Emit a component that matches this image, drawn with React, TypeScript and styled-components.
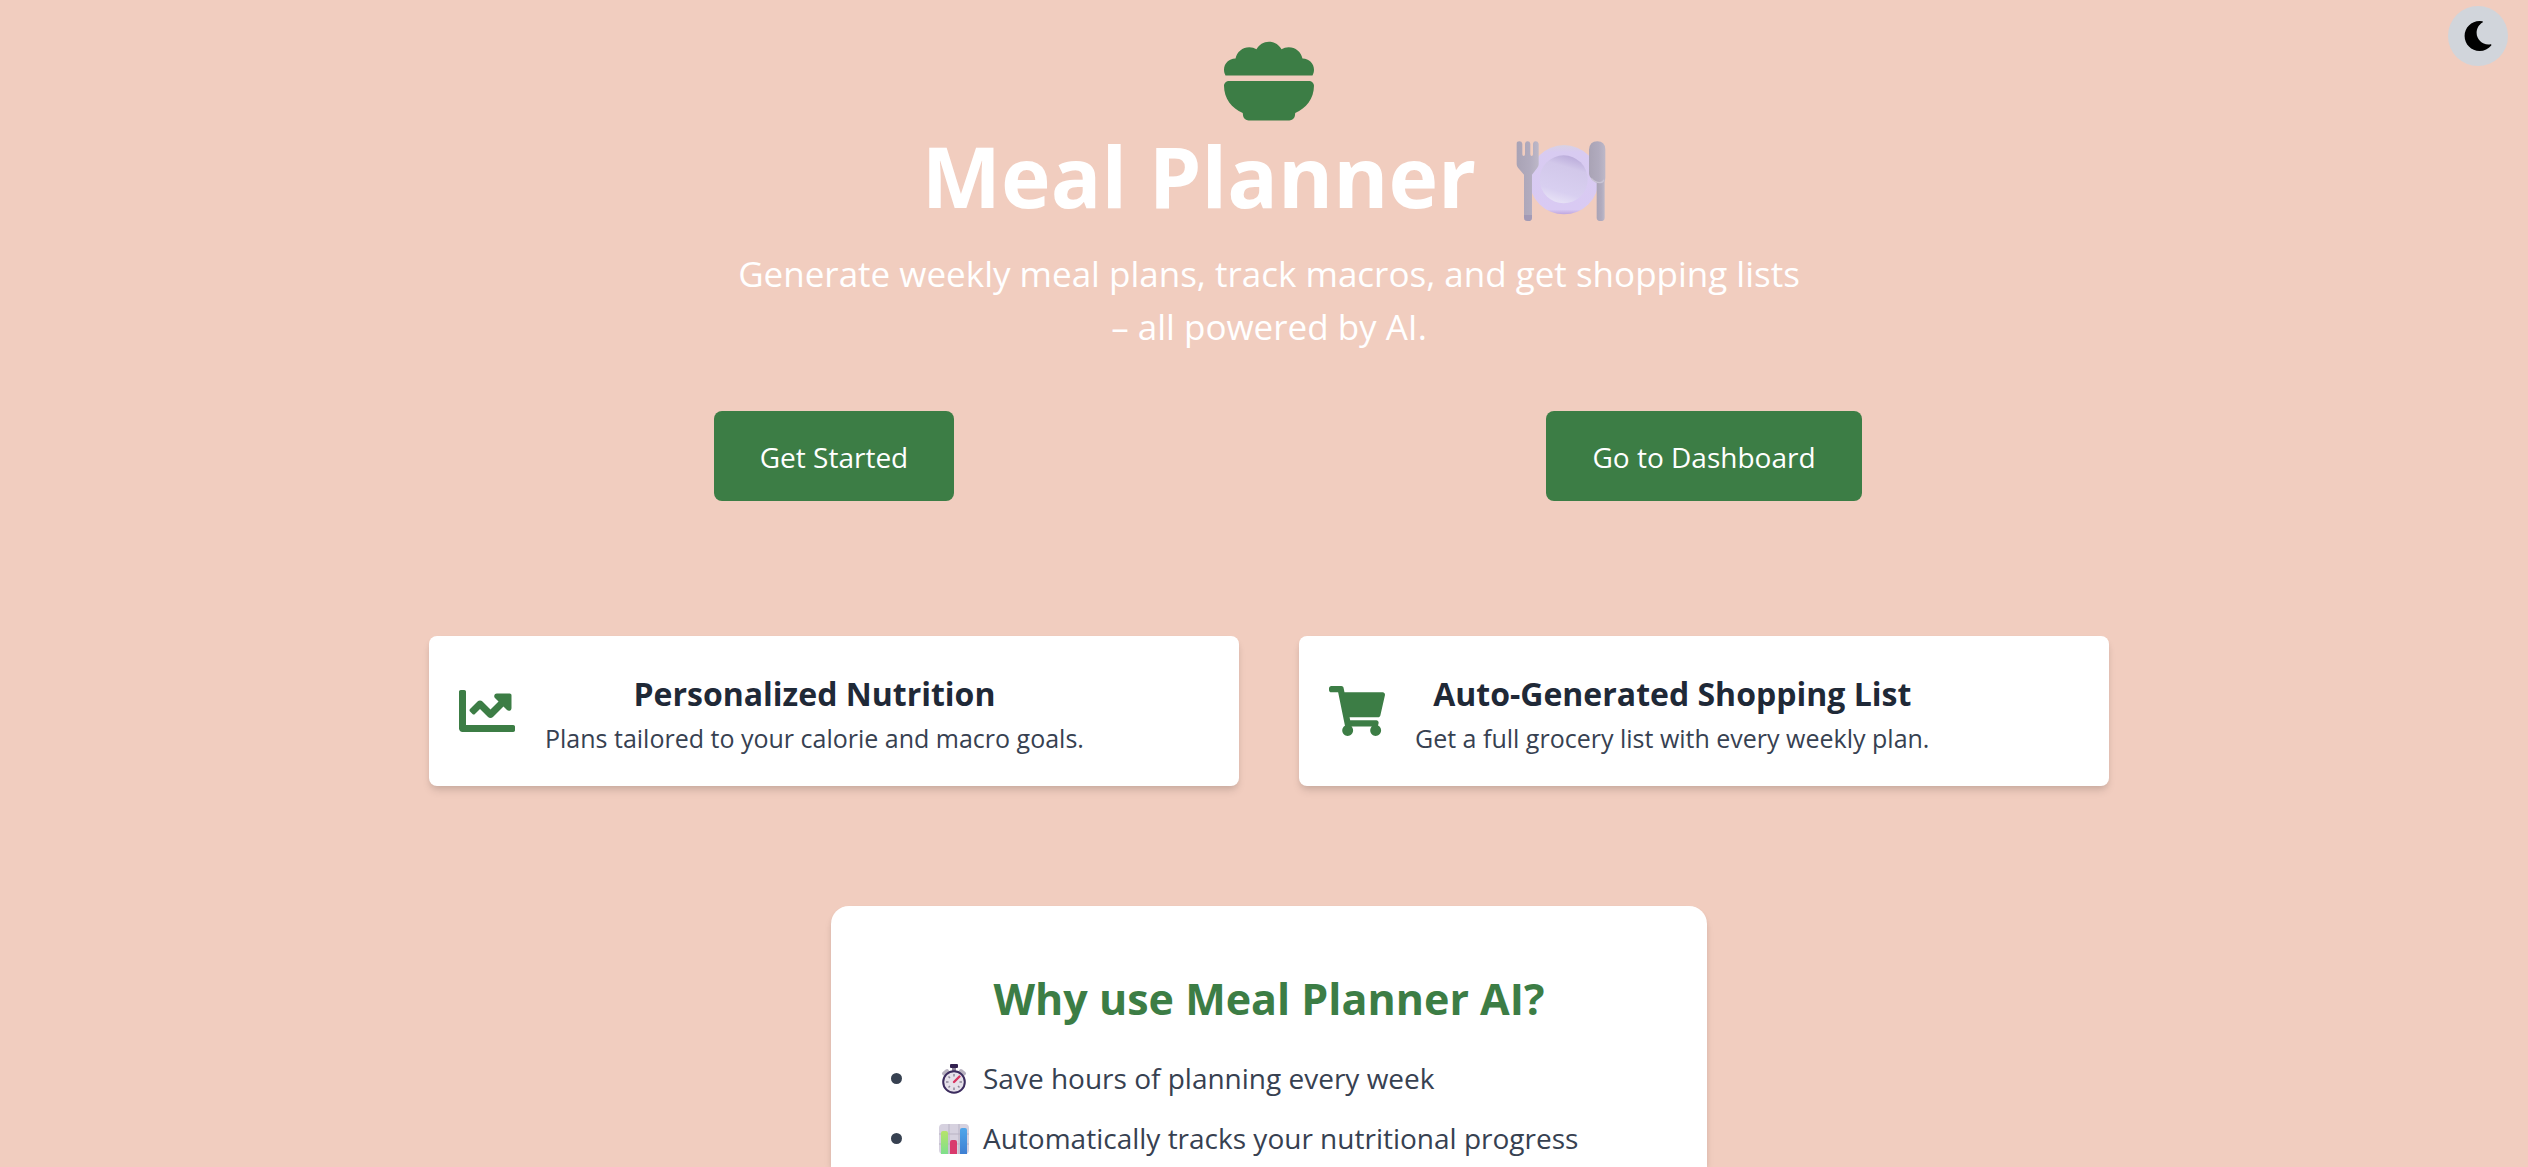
import React from "react";
import styled, { createGlobalStyle } from "styled-components";
import { FaBowlFood } from "react-icons/fa6";
import { FaChartLine, FaMoon, FaShoppingCart } from "react-icons/fa";

const GREEN = "#3c7d45";

const GlobalStyle = createGlobalStyle`
  *, *::before, *::after { box-sizing: border-box; }
  body {
    margin: 0;
    background: #f1cdbf;
    font-family: "Segoe UI", "Open Sans", "Noto Sans", sans-serif;
  }
  h1, h2, h3, p, ul { margin: 0; padding: 0; }
`;

const Page = styled.main`
  min-height: 100vh;
  padding: 36px 0 0 10px;
  display: flex;
  flex-direction: column;
  align-items: center;
  text-align: center;
`;

const ThemeToggle = styled.button`
  position: absolute;
  top: 6px;
  right: 20px;
  width: 60px;
  height: 60px;
  padding: 0;
  border: 0;
  border-radius: 50%;
  background: #d1d5db;
  color: #000;
  font-size: 30px;
  display: flex;
  align-items: center;
  justify-content: center;
  cursor: pointer;
`;

const Hero = styled.header`
  display: flex;
  flex-direction: column;
  align-items: center;
  color: #fff;
`;

const HeroIcon = styled(FaBowlFood)`
  font-size: 90px;
  color: ${GREEN};
`;

const Title = styled.h1`
  display: flex;
  align-items: center;
  gap: 40px;
  margin-top: 5px;
  font-size: 84px;
  line-height: 90px;
  font-weight: 700;

  > svg {
    overflow: visible;
  }
`;

const Tagline = styled.p`
  max-width: 1080px;
  margin-top: 26px;
  font-size: 35px;
  line-height: 53px;
`;

const Columns = styled.div<{ $top: number }>`
  width: 100%;
  max-width: 1680px;
  margin-top: ${(p) => p.$top}px;
  display: grid;
  grid-template-columns: 1fr 1fr;
  gap: 60px;
`;

const ActionButton = styled.button`
  justify-self: center;
  height: 90px;
  padding: 2px 46px 0;
  border: 0;
  border-radius: 8px;
  background: ${GREEN};
  color: #fff;
  font-family: inherit;
  font-size: 28px;
  line-height: 42px;
  cursor: pointer;
`;

const FeatureCard = styled.article`
  min-height: 150px;
  padding: 0 30px;
  display: flex;
  align-items: center;
  gap: 30px;
  border-radius: 8px;
  background: #fff;
  box-shadow: 0 6px 9px -1px rgba(0, 0, 0, 0.1), 0 3px 6px -2px rgba(0, 0, 0, 0.1);

  > svg {
    flex: none;
    font-size: 56px;
    color: ${GREEN};
  }
`;

const FeatureBody = styled.div`
  padding-top: 6px;
`;

const FeatureTitle = styled.h3`
  font-size: 32px;
  line-height: 48px;
  font-weight: 700;
  color: #1f2937;
`;

const FeatureText = styled.p`
  font-size: 25px;
  line-height: 40px;
  color: #374151;
`;

const WhyCard = styled.section`
  flex: 1;
  width: 100%;
  max-width: 876px;
  margin-top: 120px;
  padding: 60px 60px 0;
  border-radius: 18px 18px 0 0;
  background: #fff;
  box-shadow: 0 6px 9px -1px rgba(0, 0, 0, 0.1), 0 3px 6px -2px rgba(0, 0, 0, 0.1);
`;

const WhyTitle = styled.h2`
  font-size: 43px;
  line-height: 66px;
  font-weight: 700;
  color: ${GREEN};
`;

const Reasons = styled.ul`
  margin-top: 24px;
  display: flex;
  flex-direction: column;
  gap: 15px;
  list-style: none;
  text-align: left;
  font-size: 28px;
  line-height: 45px;
  color: #374151;
`;

const Reason = styled.li`
  display: flex;
  align-items: center;

  &::before {
    content: "";
    width: 11px;
    height: 11px;
    margin-right: 37px;
    border-radius: 50%;
    background: #374151;
  }

  > svg {
    flex: none;
    margin-right: 14px;
  }
`;

const PlateIcon = () => (
  <svg width="100" height="90" viewBox="73 32 300 270" aria-label="plate with cutlery" role="img">
    <defs>
      <linearGradient id="metal" x1="0" x2="1">
        <stop offset="0" stopColor="#a9a3b5" />
        <stop offset="0.6" stopColor="#b1abbe" />
        <stop offset="1" stopColor="#bdb8c8" />
      </linearGradient>
      <linearGradient id="well" x1="0.65" y1="0" x2="0.35" y2="1">
        <stop offset="0" stopColor="#baabda" />
        <stop offset="0.25" stopColor="#d2c8ea" />
        <stop offset="0.75" stopColor="#d8cff0" />
        <stop offset="1" stopColor="#e8e3f6" />
      </linearGradient>
      <linearGradient id="rim" x1="0" y1="0" x2="0" y2="1">
        <stop offset="0" stopColor="#d9d2e2" />
        <stop offset="0.1" stopColor="#d8cbf1" />
        <stop offset="0.93" stopColor="#d9caf3" />
        <stop offset="1" stopColor="#bfa6de" />
      </linearGradient>
    </defs>
    <circle cx="217" cy="178" r="104" fill="url(#rim)" />
    <circle cx="216" cy="177" r="72" fill="url(#well)" />
    <path
      d="M75 70q0-7 8-7t9 7v32q0 5 4 5t4-5V70q1-7 8-7t8 7v32q0 5 4 5t4-5V70q1-7 8-7t9 7v62q0 5-4 10l-16 21v129q0 10-12 10t-12-10V163l-18-21q-4-5-4-10z"
      fill="url(#metal)"
    />
    <path d="M97 284h24v8q0 10-12 10t-12-10z" fill="#9a8fb0" opacity="0.6" />
    <path d="M315 180h24v112q0 10-12 10t-12-10z" fill="url(#metal)" />
    <path d="M292 88q2-25 25-25t24 24v85q0 16-14 17-21-1-32-20-3-5-3-10z" fill="url(#metal)" />
    <path d="M299 174q11 13 26 13 9-1 12-9" fill="none" stroke="#c9c4d4" strokeWidth="4" />
  </svg>
);

const StopwatchIcon = () => (
  <svg width="30" height="30" viewBox="0 0 30 30" aria-hidden="true">
    <path d="M5 9.500l3-2.500M25 9.500l-3-2.500" stroke="#b8b2c0" strokeWidth="4" strokeLinecap="round" />
    <rect x="13" y="3" width="4" height="5" fill="#8d8499" />
    <rect x="11" y="0" width="8" height="4" rx="1" fill="#31204f" />
    <circle cx="15" cy="18" r="10.800" fill="#e6e1ea" stroke="#3c2c5e" strokeWidth="2" />
    <g stroke="#8f889a" strokeWidth="1.500">
      <path d="M15 10v2.500M15 23.500V26M7 18h2.500M20.500 18H23M9.500 12.500l1.500 1.500M9.500 23.500l1.500-1.500M20.500 23.500L19 22" />
    </g>
    <path d="M15 18l5.500-5.500" stroke="#d8345f" strokeWidth="2.400" strokeLinecap="round" />
  </svg>
);

const ChartIcon = () => (
  <svg width="30" height="30" viewBox="0 0 30 30" aria-hidden="true">
    <defs>
      <linearGradient id="lime" x1="0" y1="0" x2="0" y2="1">
        <stop offset="0" stopColor="#b6e36a" />
        <stop offset="1" stopColor="#7fdf8c" />
      </linearGradient>
      <linearGradient id="azure" x1="0" y1="0" x2="0" y2="1">
        <stop offset="0" stopColor="#4fa6ea" />
        <stop offset="1" stopColor="#3f7fd2" />
      </linearGradient>
    </defs>
    <rect width="30" height="30" rx="4" fill="#d6d1df" />
    <path d="M10 0v30M20 0v30M0 10h30M0 20h30" stroke="#b9b3c4" strokeWidth="1" />
    <path d="M2 30V9q0-2 2-2h3q2 0 2 2v21z" fill="url(#lime)" />
    <path d="M11 30V18q0-2 2-2h3q2 0 2 2v12z" fill="#d93a6c" />
    <path d="M21 30V6q0-2 2-2h3q2 0 2 2v24z" fill="url(#azure)" />
  </svg>
);

export default function App() {
  return (
    <>
      <GlobalStyle />
      <ThemeToggle type="button" aria-label="Toggle dark mode">
        <FaMoon />
      </ThemeToggle>
      <Page>
        <Hero>
          <HeroIcon />
          <Title>
            Meal Planner
            <PlateIcon />
          </Title>
          <Tagline>
            Generate weekly meal plans, track macros, and get shopping lists – all powered by AI.
          </Tagline>
        </Hero>
        <Columns $top={58}>
          <ActionButton type="button">Get Started</ActionButton>
          <ActionButton type="button">Go to Dashboard</ActionButton>
        </Columns>
        <Columns $top={135}>
          <FeatureCard>
            <FaChartLine />
            <FeatureBody>
              <FeatureTitle>Personalized Nutrition</FeatureTitle>
              <FeatureText>Plans tailored to your calorie and macro goals.</FeatureText>
            </FeatureBody>
          </FeatureCard>
          <FeatureCard>
            <FaShoppingCart />
            <FeatureBody>
              <FeatureTitle>Auto-Generated Shopping List</FeatureTitle>
              <FeatureText>Get a full grocery list with every weekly plan.</FeatureText>
            </FeatureBody>
          </FeatureCard>
        </Columns>
        <WhyCard>
          <WhyTitle>Why use Meal Planner AI?</WhyTitle>
          <Reasons>
            <Reason>
              <StopwatchIcon />
              Save hours of planning every week
            </Reason>
            <Reason>
              <ChartIcon />
              Automatically tracks your nutritional progress
            </Reason>
          </Reasons>
        </WhyCard>
      </Page>
    </>
  );
}
